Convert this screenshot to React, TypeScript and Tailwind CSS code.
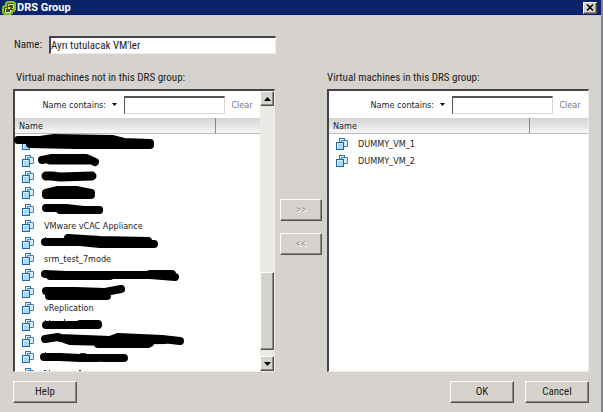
import React, { useState } from 'react';

const raised = 'border border-t-white border-l-white border-r-[#55514e] border-b-[#55514e] bg-[#d6d3ce] shadow-[inset_-1px_-1px_0_#8c8984]';
const sunken = 'border border-t-2 border-l-2 border-t-[#45424a] border-l-[#45424a] border-r-[#efede8] border-b-[#efede8] bg-white';
const listFont = "text-[9px] font-['DejaVu_Sans_Condensed','DejaVu_Sans',sans-serif]";

// Rows without a name are covered by the marker strokes
const availableVms = ['', '', '', '', '', 'VMware vCAC Appliance', '', 'srm_test_7mode', '', '', 'vReplication', '', '', '', ''];
const groupVms = ['DUMMY_VM_1', 'DUMMY_VM_2'];

const VmIcon: React.FC = () => (
    <svg className="w-3 h-3 shrink-0" viewBox="0 0 12 12" fill="#e4f3fc" stroke="#2f74b8" aria-hidden="true">
        <rect x="3.5" y="0.5" width="5" height="6" />
        <path d="M5.5 2.5h6v6h-6z" fill="#d3ebfa" stroke="#3f83c5" />
        <rect x="0.5" y="4.5" width="7" height="7" fill="#a5dbfa" stroke="#2463a8" />
        <path d="M1.5 10.5v-5h5" fill="none" stroke="#dcf2ff" />
    </svg>
);

const LogoIcon: React.FC = () => (
    <svg className="w-[14px] h-[14px] shrink-0" viewBox="0 0 14 14" aria-hidden="true">
        <path d="M6 0h6l2 2v7l-2 2h-1v1l-2 2H2l-2-2V6l2-2h1V2l2-2z" fill="#7fc02f" />
        <path d="M6 2h5l1 1v5l-1 1H9v2l-1 1H3l-1-1V7l1-1h2V3z" fill="#3d5a1c" />
        <path d="M6.5 5V3.5h5v4H10M8.5 8v3.5h-5v-4H5" fill="none" stroke="#e8dc9c" />
        <path d="M5 5h4v4H5z" fill="#4a4a22" />
        <path d="M6 6h2v2H6z" fill="#f0d98a" />
    </svg>
);

const MarkerStrokes: React.FC = () => (
    <svg className="w-[200px] h-[238px] pointer-events-none" viewBox="15 134 200 238" overflow="visible" aria-hidden="true">
        <g stroke="#000" strokeLinecap="round" strokeLinejoin="round" fill="none">
            <path d="M18 140L40 140L54 138L112 139L124 142L150 143" strokeWidth="8" />
            <path d="M30 144L75 145L150 145" strokeWidth="8" />
            <path d="M42 160L52 158L86 158L95 162" strokeWidth="8" />
            <path d="M50 160H88" strokeWidth="9" />
            <path d="M46 176L52 176L60 177L92 176" strokeWidth="9" />
            <path d="M46 193L58 190L76 190L91 193M46 195L91 195" strokeWidth="8" />
            <path d="M46 208L66 208L84 210L99 210" strokeWidth="8" />
            <path d="M60 210H99" strokeWidth="8" />
            <path d="M45 242H80L100 244L154 244M68 238L100 240L148 241" strokeWidth="8" />
            <path d="M45 274L66 275L100 275L150 275L175 277M50 276H110M150 274L172 274" strokeWidth="8" />
            <path d="M46 291L75 291L105 292L121 289M49 296L75 296L107 296M60 292H106" strokeWidth="8" />
            <path d="M46 325H98M80 324H98" strokeWidth="8" />
            <path d="M45 339L58 337L70 341L110 342L150 343M60 338L110 340L118 337L162 339L180 341M98 344L148 344M110 341L165 340" strokeWidth="8" />
            <path d="M44 357L60 357L80 358L124 358" strokeWidth="8" />
        </g>
        <path d="M44 370h2v1h-2zM49 370h1v1h-1zM79 370h2v1h-2zM45 320h1v2h-1zM49 320h1v2h-1zM64 319h1v2h-1zM45 352h1v2h-1zM80 353h6v1h-6zM98 361h5v1h-5zM45 237h1v2h-1z" fill="#333" />
    </svg>
);

interface VmListProps {
    id: string;
    vms: string[];
    scrollable?: boolean;
    rowsClass: string;
}

const VmList: React.FC<VmListProps> = ({ id, vms, scrollable, rowsClass }) => {
    const [filter, setFilter] = useState('');

    return (
        <div className={`flex h-[283px] overflow-hidden ${listFont} ${sunken}`}>
            <div className="flex flex-col flex-1 min-w-0">
                <div className="flex items-center justify-end h-[27px] pr-[7px] shrink-0">
                    <label htmlFor={id} className="whitespace-nowrap">Name contains:</label>
                    <button type="button" aria-label="Filter by" className="flex justify-center w-[18px] pr-0.5">
                        <svg className="w-[5px] h-[3px]" viewBox="0 0 5 3"><path d="M0 0h5L2.5 3z" /></svg>
                    </button>
                    <input
                        id={id}
                        value={filter}
                        onChange={(e) => setFilter(e.target.value)}
                        className="w-[101px] h-[18px] px-1 bg-white border border-t-2 border-t-[#55525a] border-l-[#55525a] border-r-[#d8d6d2] border-b-[#d8d6d2] outline-none"
                    />
                    <button type="button" onClick={() => setFilter('')} className="w-[22px] ml-1.5 text-[#77777b]">Clear</button>
                </div>
                <table className="block w-full">
                    <thead className="block">
                        <tr className="flex h-4 bg-linear-to-b from-[#d3d2d6] to-[#f6f6f7] border-b border-[#bbb9bd]">
                            <th className="flex-1 pl-1 text-left font-normal leading-4">Name</th>
                            <th aria-label="Details" className={`border-l border-[#88868a] ${scrollable ? 'w-[45px]' : 'w-[59px]'}`}></th>
                        </tr>
                    </thead>
                    <tbody className={`grid auto-rows-fr mt-0.5 ${rowsClass}`}>
                        {vms.map((vm, i) => (
                            <tr key={i} className="flex items-center pl-[7px] gap-[10px]">
                                <td><VmIcon /></td>
                                <td className="whitespace-nowrap">{vm}</td>
                            </tr>
                        ))}
                    </tbody>
                </table>
            </div>
            {scrollable && (
                <div className="flex flex-col w-[14px] bg-[#ebe9e6]">
                    <button type="button" aria-label="Scroll up" className={`flex items-center justify-center h-[15px] ${raised}`}>
                        <svg className="w-[7px] h-1" viewBox="0 0 7 4"><path d="M0 4h7L3.5 0z" /></svg>
                    </button>
                    <div className="flex-1"></div>
                    <div className={`h-[78px] ${raised}`}></div>
                    <div className="h-1.5"></div>
                    <button type="button" aria-label="Scroll down" className={`flex items-center justify-center h-[15px] ${raised}`}>
                        <svg className="w-[7px] h-1" viewBox="0 0 7 4"><path d="M0 0h7L3.5 4z" /></svg>
                    </button>
                </div>
            )}
        </div>
    );
};

const App: React.FC = () => {
    const [name, setName] = useState("Ayrı tutulacak VM'ler");

    return (
        <div className="min-h-screen bg-[#d6d3ce] border-r-2 border-[#85838d] text-[11px] leading-4 text-[#1c1c1c] font-['Roboto_Condensed','Roboto',sans-serif]">
            {/* Title bar */}
            <header className="flex items-center h-4 pl-0.5 pr-1 bg-[#0a246a] border-b border-[#c9c8dc]">
                <LogoIcon />
                <h1 className="flex-1 pl-px text-[11px] leading-[14px] font-bold text-white font-['Roboto',sans-serif]">DRS Group</h1>
                <button type="button" aria-label="Close" className={`flex items-center justify-center w-[14px] h-3 ${raised}`}>
                    <svg className="w-2 h-[7px]" viewBox="0 0 8 7" stroke="#000" strokeWidth="1.5"><path d="M1 0.5l6 6M7 0.5l-6 6" /></svg>
                </button>
            </header>
            <main className="px-3 pt-5 pb-2">
                {/* Group name */}
                <div className="flex items-center pl-0.5">
                    <label htmlFor="group-name" className="w-[35px]">Name:</label>
                    <input
                        id="group-name"
                        value={name}
                        onChange={(e) => setName(e.target.value)}
                        className={`w-[227px] h-[18px] outline-none ${sunken}`}
                    />
                </div>
                {/* VM lists */}
                <div className="grid grid-cols-[1fr_52px_1fr] mt-4 pl-px">
                    <section>
                        <h2 className="h-[19px] pl-[3px]">Virtual machines not in this DRS group:</h2>
                        <div className="relative">
                            <VmList id="available-filter" vms={availableVms} scrollable rowsClass="h-[246px]" />
                            <div className="absolute left-0.5 top-[45px]"><MarkerStrokes /></div>
                        </div>
                    </section>
                    <div className="flex flex-col items-center gap-3 pt-[129px]">
                        <button type="button" aria-label="Add" disabled className={`w-[42px] h-[22px] text-[#9a9792] text-shadow-[1px_1px_0_#fff] ${raised}`}>&gt;&gt;</button>
                        <button type="button" aria-label="Remove" disabled className={`w-[42px] h-[22px] text-[#9a9792] text-shadow-[1px_1px_0_#fff] ${raised}`}>&lt;&lt;</button>
                    </div>
                    <section>
                        <h2 className="h-[19px]">Virtual machines in this DRS group:</h2>
                        <VmList id="group-filter" vms={groupVms} rowsClass="h-[33px]" />
                    </section>
                </div>
                {/* Dialog buttons */}
                <footer className="flex gap-[11px] mt-[9px] pl-px">
                    <button type="button" className={`w-16 h-[22px] mr-auto ${raised}`}>Help</button>
                    <button type="button" className={`w-16 h-[22px] ${raised}`}>OK</button>
                    <button type="button" className={`w-16 h-[22px] ${raised}`}>Cancel</button>
                </footer>
            </main>
        </div>
    );
};

export default App;
